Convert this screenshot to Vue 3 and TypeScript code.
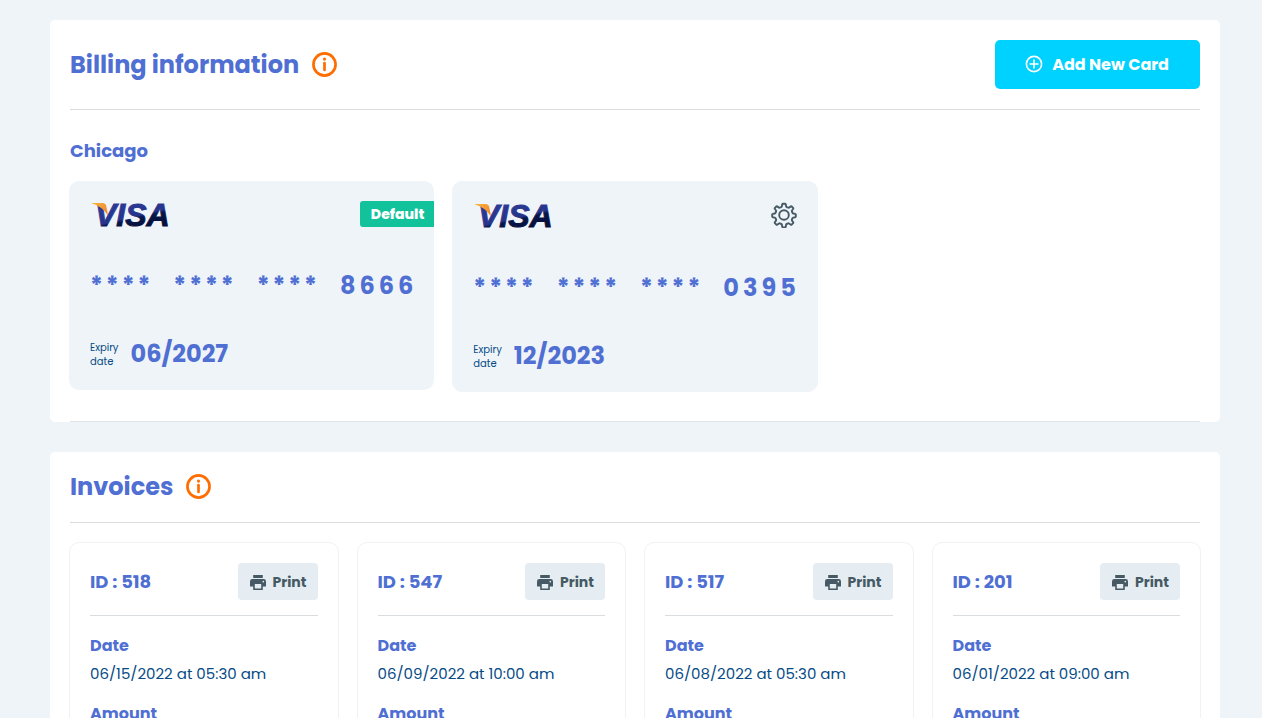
<script setup lang="ts">
interface PaymentCard {
  last4: string
  expiry: string
  isDefault: boolean
}

interface Invoice {
  id: number
  date: string
}

const cards: PaymentCard[] = [
  { last4: '8666', expiry: '06/2027', isDefault: true },
  { last4: '0395', expiry: '12/2023', isDefault: false },
]

const invoices: Invoice[] = [
  { id: 518, date: '06/15/2022 at 05:30 am' },
  { id: 547, date: '06/09/2022 at 10:00 am' },
  { id: 517, date: '06/08/2022 at 05:30 am' },
  { id: 201, date: '06/01/2022 at 09:00 am' },
]
</script>

<template>
  <main class="page">
    <section class="panel billing">
      <header class="panel-head">
        <h1 class="title">Billing information</h1>
        <button class="info" type="button" aria-label="About billing information">
          <svg viewBox="0 0 26 26" width="25" height="25" fill="none" stroke="currentColor">
            <circle cx="13" cy="13" r="11.5" stroke-width="2.8" />
            <path d="M13 11.600v7" stroke-width="2.8" stroke-linecap="round" />
            <path d="M13 7.300v.1" stroke-width="3.200" stroke-linecap="round" />
          </svg>
        </button>
        <button class="add" type="button">
          <svg viewBox="0 0 18 18" width="18" height="18" fill="none" stroke="currentColor" stroke-width="1.6">
            <circle cx="9" cy="9" r="7.6" />
            <path d="M9 4.5v9M4.5 9h9" />
          </svg>
          <span>Add New Card</span>
        </button>
      </header>

      <h2 class="location">Chicago</h2>
      <div class="cards">
        <article v-for="card in cards" :key="card.last4" class="card" :class="{ outlined: !card.isDefault }">
          <div class="card-top">
            <svg class="visa" viewBox="0 0 82 28" width="82" height="28" role="img" aria-label="Visa">
              <defs>
                <linearGradient :id="'ink' + card.last4" gradientUnits="userSpaceOnUse" x1="38" y1="2" x2="44" y2="27">
                  <stop offset="0" stop-color="#2a3a94" />
                  <stop offset="0.56" stop-color="#26348a" />
                  <stop offset="0.66" stop-color="#07164a" />
                  <stop offset="1" stop-color="#050f3c" />
                </linearGradient>
                <linearGradient :id="'wing' + card.last4" x1="0" y1="0" x2="1" y2="0.6">
                  <stop offset="0" stop-color="#f9b642" />
                  <stop offset="1" stop-color="#f28a2e" />
                </linearGradient>
              </defs>
              <text class="visa-text" x="5" y="25" :fill="`url(#ink${card.last4})`" :stroke="`url(#ink${card.last4})`">VISA</text>
              <path d="M1 2H12.500q3.200.2 3.800 3.200L18 14.500Q12.500 5.500 1 2z" :fill="`url(#wing${card.last4})`" />
            </svg>
            <span v-if="card.isDefault" class="badge">Default</span>
            <button v-else class="gear" type="button" aria-label="Card settings">
              <svg viewBox="0 0 26 26" width="26" height="26" fill="none" stroke="currentColor" stroke-width="1.9" stroke-linejoin="round">
                <circle cx="13" cy="13" r="4.8" />
                <path d="M12 1.700h2q.6 0 .7.600l.4 2.100q.1.500.6.700l1.500.6q.5.200.9-.1l1.700-1.200q.5-.3.900.1l1.400 1.400q.4.400.1.900l-1.200 1.700q-.3.400-.1.900l.6 1.500q.2.500.7.600l2 .4q.6.100.6.700v1.900q0 .6-.6.700l-2 .4q-.5.100-.7.600l-.6 1.500q-.2.500.1.900l1.200 1.700q.3.500-.1.900l-1.400 1.400q-.4.400-.9.100l-1.700-1.200q-.4-.3-.9-.1l-1.500.6q-.5.200-.6.700l-.4 2.100q-.1.600-.7.600h-2q-.6 0-.7-.6l-.4-2.100q-.1-.5-.6-.7l-1.500-.6q-.5-.2-.9.1l-1.700 1.200q-.5.300-.9-.1l-1.400-1.400q-.4-.4-.1-.9l1.200-1.700q.3-.4.1-.9l-.6-1.500q-.2-.5-.7-.6l-2-.4q-.6-.1-.6-.7v-1.900q0-.6.600-.7l2-.4q.5-.1.700-.6l.6-1.500q.2-.5-.1-.9l-1.200-1.700q-.3-.5.100-.9l1.400-1.400q.4-.4.900-.1l1.700 1.200q.4.300.9.100l1.500-.6q.5-.2.600-.7l.4-2.100q.1-.6.700-.6z" />
              </svg>
            </button>
          </div>
          <div class="number">
            <span v-for="group in 3" :key="group" class="stars"><span v-for="n in 4" :key="n">*</span></span>
            <span class="digits"><span v-for="(digit, i) in card.last4" :key="i">{{ digit }}</span></span>
          </div>
          <div class="expiry">
            <span class="expiry-label">Expiry<br />date</span>
            <strong class="expiry-date">{{ card.expiry }}</strong>
          </div>
        </article>
      </div>
      <hr class="rule" />
    </section>

    <section class="panel">
      <header class="panel-head">
        <h1 class="title">Invoices</h1>
        <button class="info" type="button" aria-label="About invoices">
          <svg viewBox="0 0 26 26" width="25" height="25" fill="none" stroke="currentColor">
            <circle cx="13" cy="13" r="11.5" stroke-width="2.8" />
            <path d="M13 11.600v7" stroke-width="2.8" stroke-linecap="round" />
            <path d="M13 7.300v.1" stroke-width="3.200" stroke-linecap="round" />
          </svg>
        </button>
      </header>
      <div class="invoices">
        <article v-for="invoice in invoices" :key="invoice.id" class="invoice">
          <header class="invoice-head">
            <h2 class="invoice-id">ID : {{ invoice.id }}</h2>
            <button class="print" type="button">
              <svg viewBox="0 0 16 15" width="16" height="15" fill="currentColor">
                <path d="M3.200 0h9.600v3H3.200z" />
                <path fill-rule="evenodd" d="M2.400 4h11.200Q16 4 16 6.400V11.500h-3.200V15H3.200v-3.500H0V6.400Q0 4 2.400 4zM4.800 9v4.400h6.400V9zM13.300 5.700a.85.85 0 1 0 0 1.700.85.85 0 0 0 0-1.700z" />
              </svg>
              <span>Print</span>
            </button>
          </header>
          <h3 class="field">Date</h3>
          <p class="value">{{ invoice.date }}</p>
          <h3 class="field">Amount</h3>
        </article>
      </div>
    </section>
  </main>
</template>

<style>
body {
  background: #eff4f8;
}
</style>

<style scoped>
.page {
  box-sizing: border-box;
  padding: 20px 42px 20px 50px;
  display: flex;
  flex-direction: column;
  gap: 30px;
  font-family: Poppins, Inter, "Liberation Sans", sans-serif;
  color: #064b86;
}
h1, h2, h3, p {
  margin: 0;
}
h1, h2, h3, .expiry-date, .number {
  color: #4f6fd3;
  font-weight: 700;
}
button {
  font-family: inherit;
  font-weight: 700;
  border: 0;
  padding: 0;
  background: none;
  display: flex;
  align-items: center;
  cursor: pointer;
}
svg {
  display: block;
  flex: none;
}
.panel {
  background: #fff;
  border-radius: 5px;
  padding: 20px;
}
.billing {
  padding-bottom: 0;
}
.rule {
  height: 1px;
  margin: 29px 0 0;
  border: 0;
  background: #dfe3e6;
}
.panel-head {
  display: flex;
  align-items: center;
  gap: 13px;
  padding-bottom: 20px;
  border-bottom: 1px solid #d9dde0;
}
.title {
  font-size: 24px;
  line-height: 30px;
}
.info {
  padding-bottom: 1px;
  color: #ff6d00;
}
.add {
  margin-left: auto;
  height: 49px;
  padding: 0 31px 1px 30px;
  gap: 9px;
  border-radius: 5px;
  background: #00d2ff;
  color: #fff;
  font-size: 16px;
}
.location {
  margin-top: 29px;
  font-size: 18px;
  line-height: 24px;
}
.cards {
  display: grid;
  grid-template-columns: repeat(3, 1fr);
  gap: 18px;
  align-items: start;
  margin: 18px -1px 0;
}
.card {
  background: #eff4f8;
  border-radius: 10px;
  padding: 20px 0 20px 21px;
}
.outlined {
  border: 1px solid #eff4f8;
  padding: 20px 0 19px 20px;
}
.card-top {
  display: flex;
  justify-content: space-between;
  align-items: flex-start;
  height: 28px;
}
.outlined .card-top {
  height: 29px;
}
.visa {
  overflow: visible;
}
.visa-text {
  font-family: "Liberation Sans", sans-serif;
  font-size: 32px;
  font-weight: 700;
  font-style: italic;
  stroke-width: 1px;
}
.badge {
  height: 26px;
  line-height: 26px;
  padding: 0 10px 0 11px;
  border-radius: 3px 0 0 3px;
  background: #12c29b;
  color: #fff;
  font-size: 14px;
  font-weight: 800;
}
.gear {
  margin-right: 20px;
  color: #455a64;
}
.number {
  display: flex;
  gap: 23px;
  margin-top: 41px;
  font-size: 24px;
  line-height: 32px;
}
.stars {
  display: flex;
  gap: 3px;
}
.digits {
  display: flex;
  gap: 4px;
}
.expiry {
  display: flex;
  align-items: center;
  gap: 12px;
  height: 30px;
  margin-top: 38px;
}
.expiry-label {
  font-size: 10px;
  line-height: 14px;
}
.expiry-date {
  padding-bottom: 2px;
  font-size: 24px;
  line-height: 28px;
}
.invoices {
  display: grid;
  grid-template-columns: repeat(4, 1fr);
  gap: 18px;
  margin: 19px -1px 0;
}
.invoice {
  border: 1px solid #f0f2f3;
  border-radius: 10px;
  padding: 20px;
}
.invoice-head {
  display: flex;
  justify-content: space-between;
  align-items: center;
  padding-bottom: 15px;
  border-bottom: 1px solid #d9dde0;
  margin-bottom: 18px;
}
.invoice-id {
  font-size: 18px;
  line-height: 24px;
}
.print {
  height: 37px;
  padding: 1px 11px 0 12px;
  gap: 7px;
  border-radius: 4px;
  background: #e5ecf2;
  color: #455a64;
  font-size: 14px;
}
.field {
  font-size: 16px;
  line-height: 24px;
}
.value {
  margin: 4px 0 16px;
  font-size: 15px;
  line-height: 24px;
}
</style>
